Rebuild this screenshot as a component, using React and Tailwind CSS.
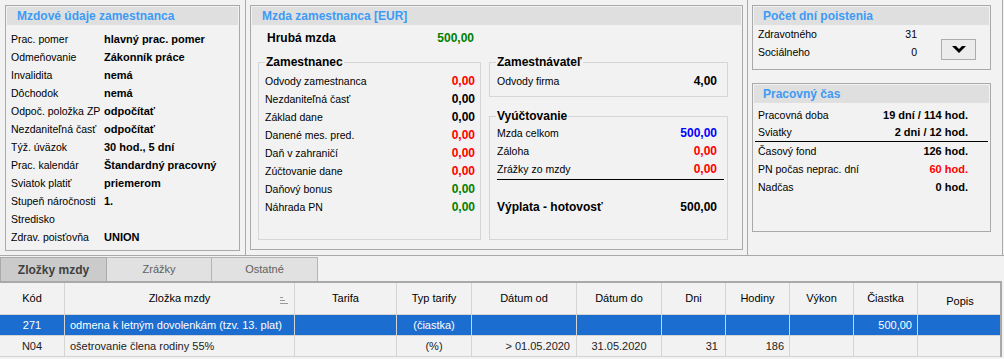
import React from 'react';

const employeeRows = [
    ['Prac. pomer', 'hlavný prac. pomer'],
    ['Odmeňovanie', 'Zákonník práce'],
    ['Invalidita', 'nemá'],
    ['Dôchodok', 'nemá'],
    ['Odpoč. položka ZP', 'odpočítať'],
    ['Nezdaniteľná časť', 'odpočítať'],
    ['Týž. úväzok', '30 hod., 5 dní'],
    ['Prac. kalendár', 'Štandardný pracovný'],
    ['Sviatok platiť', 'priemerom'],
    ['Stupeň náročnosti', '1.'],
    ['Stredisko', ''],
    ['Zdrav. poisťovňa', 'UNION'],
];

const RED = 'text-[#ff0000]';
const GREEN = 'text-[#008000]';
const BLUE = 'text-[#0000ff]';
const BLACK = 'text-black';

const employeeWage = [
    ['Odvody zamestnanca', '0,00', RED],
    ['Nezdaniteľná časť', '0,00', BLACK],
    ['Základ dane', '0,00', BLACK],
    ['Danené mes. pred.', '0,00', RED],
    ['Daň v zahraničí', '0,00', RED],
    ['Zúčtovanie dane', '0,00', RED],
    ['Daňový bonus', '0,00', GREEN],
    ['Náhrada PN', '0,00', GREEN],
];

const settlement = [
    ['Mzda celkom', '500,00', BLUE],
    ['Záloha', '0,00', RED],
    ['Zrážky zo mzdy', '0,00', RED],
];

const columns = [
    { label: 'Kód', w: 'w-[65px]', cell: 'justify-center' },
    { label: 'Zložka mzdy', w: 'w-[230px]', cell: 'justify-start pl-[5px]', sort: true },
    { label: 'Tarifa', w: 'w-[102px]', cell: 'justify-center' },
    { label: 'Typ tarify', w: 'w-[75px]', cell: 'justify-center' },
    { label: 'Dátum od', w: 'w-[105px]', cell: 'justify-end pr-[6px]' },
    { label: 'Dátum do', w: 'w-[85px]', cell: 'justify-center' },
    { label: 'Dni', w: 'w-[64px]', cell: 'justify-end pr-[7px]' },
    { label: 'Hodiny', w: 'w-[64px]', cell: 'justify-end pr-[5px]' },
    { label: 'Výkon', w: 'w-[64px]', cell: 'justify-end pr-[5px]' },
    { label: 'Čiastka', w: 'w-[64px]', cell: 'justify-end pr-[5px]' },
    { label: 'Popis', w: 'w-[84px]', cell: 'justify-start pl-[5px]' },
];

const tableRows = [
    { selected: true, cells: ['271', 'odmena k letným dovolenkám (tzv. 13. plat)', '', '(čiastka)', '', '', '', '', '', '500,00', ''] },
    { selected: false, cells: ['N04', 'ošetrovanie člena rodiny 55%', '', '(%)', '> 01.05.2020', '31.05.2020', '31', '186', '', '', ''] },
];

const Band = ({ title, pad = 'pl-[10px]' }) => (
    <div className={`h-[18px] bg-[#dfdfdf] ${pad} flex items-center text-[#3d9bf5] font-bold text-[12px] whitespace-nowrap`}>
        {title}
    </div>
);

const Group = ({ title, className, children }) => (
    <fieldset className={`border border-[#d6d6d6] ${className}`}>
        <legend className="ml-[6px] px-[1px] font-bold text-[12px] leading-[14px]">{title}</legend>
        {children}
    </fieldset>
);

const ValueRow = ({ label, value, color, h = 'h-[18px]' }) => (
    <div className={`${h} flex items-center justify-between whitespace-nowrap`}>
        <span>{label}</span>
        <span className={`font-bold text-[12px] ${color}`}>{value}</span>
    </div>
);

const SortIcon = () => (
    <svg width="8" height="7" viewBox="0 0 8 7" className="ml-auto mr-[6px]">
        <rect x="0" y="0" width="3" height="1" fill="#9a9a9a" />
        <rect x="0" y="3" width="5" height="1" fill="#9a9a9a" />
        <rect x="0" y="6" width="8" height="1" fill="#9a9a9a" />
    </svg>
);

export default function App() {
    return (
        <div className="w-[1004px] h-[359px] overflow-hidden bg-[#f2f2f2] text-black font-['Liberation_Sans',Arial,sans-serif] text-[10.5px] leading-none">
            {/* TOP AREA */}
            <div className="flex h-[256px] border-b border-[#a9a9a9]">
                {/* LEFT COLUMN */}
                <div className="w-[246px] border-r border-[#a9a9a9] pt-[5px] pl-[5px]">
                    <div className="w-[235px] h-[246px] border border-[#a9a9a9] p-px">
                        <Band title="Mzdové údaje zamestnanca" />
                        <div className="mt-[5px] pl-[4px]">
                            {employeeRows.map(([label, value]) => (
                                <div key={label} className="h-[18px] flex items-center whitespace-nowrap">
                                    <span className="w-[93px]">{label}</span>
                                    <span className="font-bold text-[11px]">{value}</span>
                                </div>
                            ))}
                        </div>
                    </div>
                </div>

                {/* MIDDLE COLUMN */}
                <div className="w-[501px] pt-[5px] pl-[4px]">
                    <div className="w-[493px] h-[245px] border border-[#a9a9a9] p-px">
                        <Band title="Mzda zamestnanca [EUR]" />
                        <div className="flex">
                            <div className="ml-[6px] w-[223px]">
                                <div className="mt-[4px] h-[18px] flex items-center justify-between pl-[9px] pr-[7px] font-bold text-[12px]">
                                    <span>Hrubá mzda</span>
                                    <span className={GREEN}>500,00</span>
                                </div>
                                <Group title="Zamestnanec" className="mt-[8px] h-[185px]">
                                    <div className="pt-[3px] pl-[6px] pr-[5px]">
                                        {employeeWage.map(([label, value, color]) => (
                                            <ValueRow key={label} label={label} value={value} color={color} />
                                        ))}
                                    </div>
                                </Group>
                            </div>
                            <div className="ml-[8px] w-[239px]">
                                <Group title="Zamestnávateľ" className="mt-[30px] h-[42px]">
                                    <div className="pt-[3px] pl-[7px] pr-[10px]">
                                        <ValueRow label="Odvody firma" value="4,00" color={BLACK} />
                                    </div>
                                </Group>
                                <Group title="Vyúčtovanie" className="mt-[12px] h-[131px]">
                                    <div className="pt-[1px] pl-[7px] pr-[10px]">
                                        {settlement.map(([label, value, color]) => (
                                            <ValueRow key={label} label={label} value={value} color={color} />
                                        ))}
                                    </div>
                                    <div className="mt-[1px] ml-[7px] mr-[3px] border-t border-black" />
                                    <div className="mt-[18px] pl-[7px] pr-[10px] font-bold text-[12px]">
                                        <ValueRow label="Výplata - hotovosť" value="500,00" color={BLACK} />
                                    </div>
                                </Group>
                            </div>
                        </div>
                    </div>
                </div>

                {/* RIGHT COLUMN */}
                <div className="w-[256px] border-x border-[#a9a9a9] pt-[5px] pl-[4px]">
                    <div className="w-[239px] h-[65px] border border-[#a9a9a9] p-px">
                        <Band title="Počet dní poistenia" pad="pl-[9px]" />
                        <div className="flex">
                            <div className="w-[165px] pl-[4px] pr-[2px]">
                                <div className="h-[18px] flex items-center justify-between"><span>Zdravotného</span><span>31</span></div>
                                <div className="h-[18px] flex items-center justify-between"><span>Sociálneho</span><span>0</span></div>
                            </div>
                            <button className="ml-[22px] mt-[14px] w-[35px] h-[21px] border border-[#adadad] bg-[#ececec] flex items-center justify-center">
                                <svg width="14" height="7" viewBox="0 0 14 7">
                                    <polygon points="0,0 4,0 7,3 10,0 14,0 7,7" fill="#000" />
                                </svg>
                            </button>
                        </div>
                    </div>

                    <div className="mt-[13px] w-[239px] h-[149px] border border-[#a9a9a9] p-px">
                        <Band title="Pracovný čas" pad="pl-[9px]" />
                        <div className="mt-[4px] pl-[4px] pr-[21px] text-[10.5px]">
                            <div className="h-[17px] flex items-center justify-between"><span>Pracovná doba</span><span className="font-bold text-[11px]">19 dní / 114 hod.</span></div>
                            <div className="h-[17px] flex items-center justify-between"><span>Sviatky</span><span className="font-bold text-[11px]">2 dni / 12 hod.</span></div>
                        </div>
                        <div className="mx-[1px] border-t border-black" />
                        <div className="pl-[4px] pr-[21px]">
                            <div className="h-[18px] flex items-center justify-between"><span>Časový fond</span><span className="font-bold text-[11px]">126 hod.</span></div>
                            <div className="h-[18px] flex items-center justify-between"><span>PN počas neprac. dní</span><span className="font-bold text-[11px] text-[#ff0000]">60 hod.</span></div>
                            <div className="h-[18px] flex items-center justify-between"><span>Nadčas</span><span className="font-bold text-[11px]">0 hod.</span></div>
                        </div>
                    </div>
                </div>
            </div>

            {/* TABS */}
            <div className="mt-[1px] flex h-[24px]">
                <div className="w-[107px] bg-[#cbcbcb] border-t border-l border-r border-[#a9a9a9] flex items-center justify-center font-bold text-[12px] text-[#404040]">
                    Zložky mzdy
                </div>
                <div className="w-[105px] bg-[#e1e1e1] border-t border-r border-[#b4b4b4] flex items-center justify-center text-[11px] text-[#606060]">
                    Zrážky
                </div>
                <div className="w-[106px] bg-[#e1e1e1] border-t border-r border-[#b4b4b4] flex items-center justify-center text-[11px] text-[#606060]">
                    Ostatné
                </div>
            </div>

            {/* TABLE */}
            <div className="w-[1002px] border-t-2 border-r-2 border-[#a9a9a9] text-[11px]">
                <div className="flex h-[32px] border-b border-[#d4d4d4]">
                    {columns.map((c) => (
                        <div key={c.label} className={`${c.w} shrink-0 border-r border-[#d4d4d4] last:border-r-0 flex items-center justify-center relative`}>
                            <span className={c.label === 'Popis' ? 'mt-[5px]' : ''}>{c.label}</span>
                            {c.sort && (
                                <span className="absolute right-0 top-[14px]"><SortIcon /></span>
                            )}
                        </div>
                    ))}
                </div>
                {tableRows.map((r, i) => (
                    <div key={i} className={`flex h-[21px] border-b border-[#d4d4d4] ${r.selected ? 'bg-[#1c6dd0] text-white' : 'text-[#222]'}`}>
                        {r.cells.map((v, j) => (
                            <div key={j} className={`${columns[j].w} ${columns[j].cell} shrink-0 border-r border-[#d4d4d4] last:border-r-0 flex items-center whitespace-nowrap`}>
                                {v}
                            </div>
                        ))}
                    </div>
                ))}
            </div>
        </div>
    );
}
